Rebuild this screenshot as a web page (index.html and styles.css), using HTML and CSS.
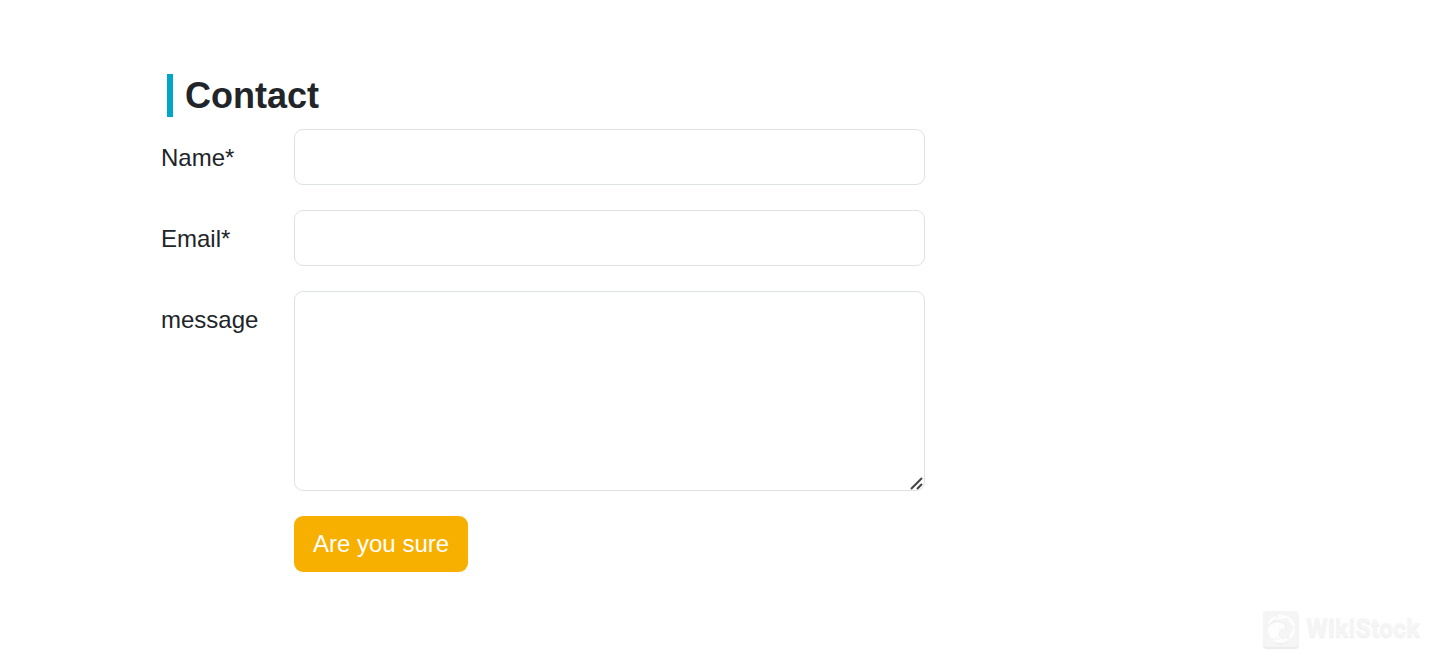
FILE: index.html
```html
<!DOCTYPE html>
<html lang="en">
<head>
  <meta charset="UTF-8" />
  <meta name="viewport" content="width=device-width, initial-scale=1" />
  <title>Contact</title>
  <link rel="stylesheet" href="styles.css">
</head>
<body>
  <main class="contact">
    <h1 class="contact-title">Contact</h1>
    <form class="contact-form">
      <div class="form-row">
        <label for="name">Name*</label>
        <input type="text" id="name" class="field" required />
      </div>
      <div class="form-row">
        <label for="email">Email*</label>
        <input type="email" id="email" class="field" required />
      </div>
      <div class="form-row">
        <label for="message">message</label>
        <textarea id="message" class="field"></textarea>
      </div>
      <div class="form-row">
        <button type="submit" class="submit-btn">Are you sure</button>
      </div>
    </form>
  </main>

  <div class="watermark">
    <svg class="watermark-logo" viewBox="0 0 36 38" aria-hidden="true">
      <rect y="2" width="36" height="36" rx="4" fill="#ececec" />
      <rect width="36" height="36" rx="4" fill="#f5f5f5" />
      <!-- ring segments -->
      <g fill="none" stroke="#fefefe" stroke-width="2">
        <path d="M6 13A13 13 0 0 1 13 6M15 5A13 13 0 0 1 23 6L12 8" />
        <path d="M25 7A13 13 0 0 1 31 15L27 10M31 17A13 13 0 0 1 27 27L31 18" />
        <path d="M25 29A13 13 0 0 1 13 30L24 28" />
      </g>
      <!-- eagle head -->
      <path fill="#fefefe" d="M5 19C6 14 10 11 15 11C19 11 22 13 23 17L20 17C18 17 16 19 16 21C16 24 17 26 20 28C16 28 14 27 12 25L13 29L9 26L9 28L6 24L7 22L5 22Z" />
      <path fill="none" stroke="#ececec" d="M7 13C11 10 18 9 22 14L23 17M16 22C16 25 18 27 21 28M13 32A13 13 0 0 0 25 30" />
    </svg>
    <span class="watermark-text">WikiStock</span>
  </div>
</body>
</html>
```
FILE: styles.css
```css
* {
  margin: 0;
  padding: 0;
  box-sizing: border-box;
}

body {
  font-family: "Liberation Sans", Arial, sans-serif;
  font-size: 24px;
  line-height: 36px;
  color: #212529;
  background-color: #fff;
}

.contact {
  max-width: 925px;
  padding: 74px 0 40px 161px;
}

.contact-title {
  margin: 0 0 12px 6px;
  padding-left: 12px;
  border-left: 6px solid #00a5c8;
  font-size: 36px;
  line-height: 43px;
}

.contact-form {
  display: flex;
  flex-direction: column;
  gap: 25px;
}

.form-row {
  display: grid;
  grid-template-columns: 133px 1fr;
  align-items: start;
}

.form-row label {
  padding-top: 11px;
}

.field {
  display: block;
  width: 100%;
  height: 56px;
  padding: 9px 18px;
  border: 1px solid #dee2e6;
  border-radius: 9px;
  background-color: #fff;
  font: inherit;
  color: inherit;
}

.field:focus {
  outline: 3px solid #b3e4ef;
}

textarea.field {
  height: 200px;
  resize: vertical;
}

textarea.field::-webkit-scrollbar {
  width: 16px;
  height: 16px;
}

textarea.field::-webkit-resizer {
  background: url("data:image/svg+xml,%3Csvg xmlns='http://www.w3.org/2000/svg' width='16' height='16'%3E%3Cpath d='M2 14L13 3M8 14L13 9' stroke='%23444' stroke-width='2'/%3E%3C/svg%3E") no-repeat;
}

.submit-btn {
  grid-column: 2;
  justify-self: start;
  height: 56px;
  padding: 0 19px;
  border: none;
  border-radius: 9px;
  background-color: #f8b000;
  color: #fff;
  font: inherit;
  cursor: pointer;
}

.submit-btn:hover {
  background-color: #e0a000;
}

/* brand mark pinned to the window corner */
.watermark {
  position: fixed;
  right: 9px;
  bottom: 16px;
  display: flex;
  align-items: flex-start;
  gap: 7px;
}

.watermark-logo {
  width: 36px;
  height: 38px;
}

.watermark-text {
  font-family: Roboto, "Liberation Sans", sans-serif;
  font-size: 25px;
  font-weight: 900;
  color: #f5f5f5;
  text-shadow: 0 1px 1px #ececec;
}
```
